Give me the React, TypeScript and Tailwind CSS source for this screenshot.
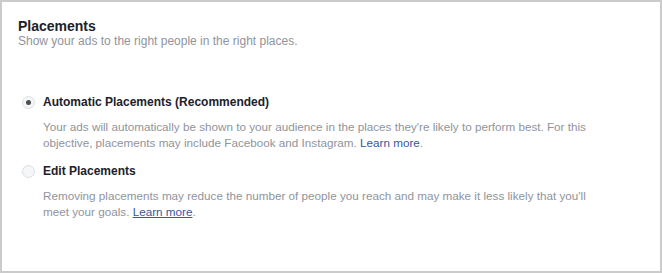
import React from 'react';

interface OptionProps {
  label: string;
  lines: [string, string];
  checked: boolean;
  underlineLink?: boolean;
}

const Radio: React.FC<{ checked: boolean }> = ({ checked }) => (
  <span className="w-[13px] h-[13px] rounded-full border border-[#dddfe2] bg-[#f5f6f7] flex items-center justify-center shrink-0">
    {checked && <span className="w-[5px] h-[5px] rounded-full bg-[#4b4f56]" />}
  </span>
);

const PlacementOption: React.FC<OptionProps> = ({ label, lines, checked, underlineLink = false }) => {
  return (
    <div className="flex flex-col">
      <div className="flex items-center">
        <div className="w-[25px] pl-[4px]">
          <Radio checked={checked} />
        </div>
        <span className="text-[12px] leading-[16px] font-bold text-[#1d2129]">{label}</span>
      </div>
      <p className="mt-[9px] ml-[25px] w-[590px] text-[11.7px] leading-[16px] text-[#90949c]">
        {lines[0]}
        <br />
        {lines[1]}{' '}
        <a className={`text-[#365899] ${underlineLink ? 'underline' : ''}`}>Learn more</a>.
      </p>
    </div>
  );
};

export default function App() {
  return (
    <div
      className="w-[662px] h-[273px] bg-white border-2 border-[#cbcbcb] px-[16px] pt-[17px]"
      style={{ fontFamily: '"Liberation Sans", Arial, sans-serif' }}
    >
      <h2 className="text-[14px] leading-[15px] font-bold text-[#1d2129]">Placements</h2>
      <p className="text-[12px] leading-[15px] text-[#90949c]">Show your ads to the right people in the right places.</p>

      <div className="mt-[45px] flex flex-col gap-[12px]">
        <PlacementOption
          label="Automatic Placements (Recommended)"
          lines={[
            "Your ads will automatically be shown to your audience in the places they're likely to perform best. For this",
            'objective, placements may include Facebook and Instagram.',
          ]}
          checked
        />
        <PlacementOption
          label="Edit Placements"
          lines={[
            "Removing placements may reduce the number of people you reach and may make it less likely that you'll",
            'meet your goals.',
          ]}
          checked={false}
          underlineLink
        />
      </div>
    </div>
  );
}
